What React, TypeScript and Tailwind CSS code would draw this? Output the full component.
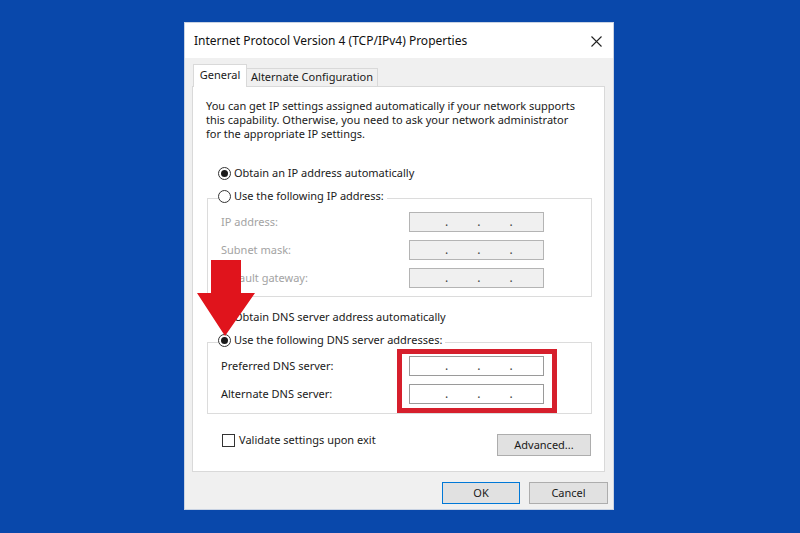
import React from 'react';

const font = { fontFamily: '"Noto Sans", "Open Sans", Arial, sans-serif' };

const Radio: React.FC<{ checked?: boolean }> = ({ checked }) => (
  <span className="flex h-[13px] w-[13px] shrink-0 items-center justify-center rounded-full border border-[#333] bg-white">
    {checked && <span className="block h-[7px] w-[7px] rounded-full bg-[#1a1a1a]" />}
  </span>
);

const IpBox: React.FC<{ disabled?: boolean }> = ({ disabled }) => (
  <div
    className={`flex h-[20px] w-[135px] items-center gap-[29px] border pl-[35px] text-[12px] leading-none text-[#444] ${
      disabled ? 'border-[#b4b4b4] bg-[#f0f0f0]' : 'border-[#9a9a9a] bg-white'
    }`}
  >
    <span>.</span>
    <span>.</span>
    <span>.</span>
  </div>
);

const Row: React.FC<{ label: string; disabled?: boolean }> = ({ label, disabled }) => (
  <div className="flex h-[20px] items-center">
    <span className={`w-[201px] pl-[13px] ${disabled ? 'text-[#a3a3a3]' : 'text-[#1a1a1a]'}`}>{label}</span>
    <IpBox disabled={disabled} />
  </div>
);

const Legend: React.FC<{ label: string; checked?: boolean }> = ({ label, checked }) => (
  <div className="-mt-[11px] ml-[10px] flex h-[16px] w-fit items-center gap-[3px] bg-white pr-[3px]">
    <Radio checked={checked} />
    <span>{label}</span>
  </div>
);

export default function App() {
  return (
    <div className="relative h-[533px] w-[800px] overflow-hidden bg-[#0948ab] pl-[184px] pt-[22px]" style={font}>
      <div className="flex h-[488px] w-[430px] flex-col border border-[#c9d3e3] bg-[#f0f0f0] text-[11px] text-[#1a1a1a]">
        {/* title bar */}
        <div className="flex h-[35px] shrink-0 items-center justify-between bg-white pl-[9px] pr-[11px]">
          <span className="text-[12px] text-[#111]">Internet Protocol Version 4 (TCP/IPv4) Properties</span>
          <svg width="11" height="11" viewBox="0 0 11 11" className="mt-[1px]">
            <path d="M0.5 0.5 L10.5 10.5 M10.5 0.5 L0.5 10.5" stroke="#222" strokeWidth="1.1" />
          </svg>
        </div>

        <div className="flex flex-1 flex-col pl-[7px] pt-[6px]">
          {/* tabs */}
          <div className="flex h-[22px] items-end whitespace-nowrap pl-[1px]">
            <div className="relative z-10 -mb-px flex h-[23px] w-[54px] items-center justify-center border border-b-0 border-[#d9d9d9] bg-white pb-[2px]">
              General
            </div>
            <div className="flex h-[18px] w-[131px] items-center justify-center border border-b-0 border-l-0 border-[#d9d9d9] bg-[#f0f0f0]">
              Alternate Configuration
            </div>
          </div>

          {/* panel */}
          <div className="flex h-[386px] w-[413px] flex-col border border-[#d9d9d9] bg-white pl-[14px] pr-[12px]">
            <p className="-ml-px w-[374px] pt-[12px] leading-[14px]">
              You can get IP settings assigned automatically if your network supports this capability. Otherwise, you need
              to ask your network administrator for the appropriate IP settings.
            </p>

            <div className="ml-[11px] mt-[24px] flex h-[16px] items-center gap-[3px]">
              <Radio checked />
              <span>Obtain an IP address automatically</span>
            </div>

            <div className="mt-[17px] flex h-[99px] flex-col border border-[#dcdcdc]">
              <Legend label="Use the following IP address:" />
              <div className="mt-[8px] flex flex-col gap-[8px]">
                <Row label="IP address:" disabled />
                <Row label="Subnet mask:" disabled />
                <Row label="Default gateway:" disabled />
              </div>
            </div>

            <div className="ml-[11px] mt-[12px] flex h-[16px] items-center gap-[3px]">
              <Radio />
              <span>Obtain DNS server address automatically</span>
            </div>

            <div className="mt-[17px] flex h-[72px] flex-col border border-[#dcdcdc]">
              <Legend label="Use the following DNS server addresses:" checked />
              <div className="mt-[8px] flex flex-col gap-[8px]">
                <Row label="Preferred DNS server:" />
                <Row label="Alternate DNS server:" />
              </div>
            </div>

            <div className="mt-[18px] flex justify-between">
              <div className="ml-[15px] flex h-[16px] items-center gap-[4px]">
                <span className="block h-[13px] w-[13px] border border-[#333] bg-white" />
                <span>Validate settings upon exit</span>
              </div>
              <button className="mr-px mt-[2px] h-[22px] w-[94px] border border-[#adadad] bg-[#e1e1e1] text-[11px]">
                Advanced...
              </button>
            </div>
          </div>

          {/* buttons */}
          <div className="mt-[10px] flex justify-end gap-[9px] pr-[5px]">
            <button className="h-[22px] w-[78px] border border-[#0078d7] bg-[#e1e1e1] text-[11px]">OK</button>
            <button className="h-[22px] w-[79px] border border-[#adadad] bg-[#e1e1e1] text-[11px]">Cancel</button>
          </div>
        </div>
      </div>

      {/* annotations */}
      <svg className="absolute left-[196px] top-[260px]" width="60" height="77" viewBox="0 0 60 77">
        <path d="M15 0 H45 V33 H59 L29 76 L1 33 H15 Z" fill="#e0141c" />
      </svg>
      <div className="absolute left-[397px] top-[349px] h-[64px] w-[160px] border-[5px] border-[#d61f2c]" />
    </div>
  );
}
